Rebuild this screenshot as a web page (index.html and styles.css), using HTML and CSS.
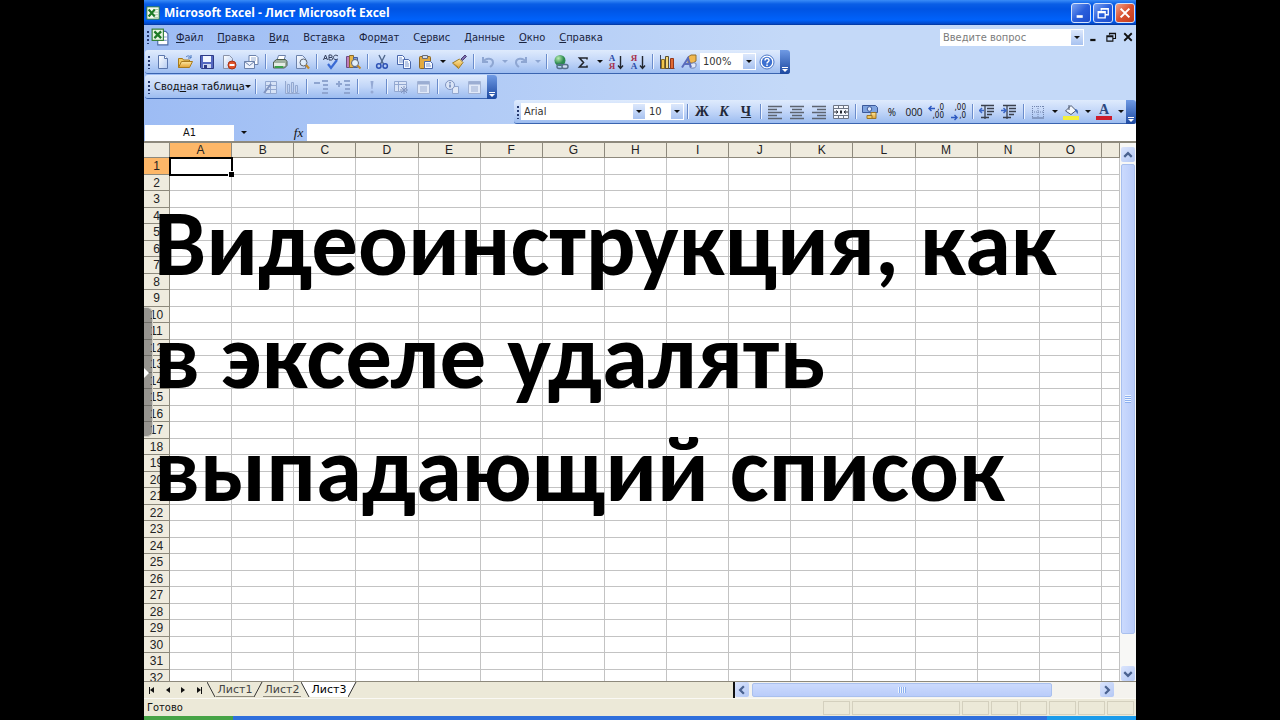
FILE: index.html
```html
<!DOCTYPE html>
<html lang="ru">
<head>
    <meta charset="UTF-8">
    <meta name="viewport" content="width=device-width, initial-scale=1.0">
    <title>Microsoft Excel - Лист Microsoft Excel</title>
    <link rel="stylesheet" href="styles.css">
</head>
<body>

<!-- Иконки -->
<svg class="sprite" aria-hidden="true">
    <defs>
        <linearGradient id="g-blue" x1="0" y1="0" x2="1" y2="1"><stop offset="0" stop-color="#fff"/><stop offset="1" stop-color="#b4cbf2"/></linearGradient>
        <linearGradient id="g-gold" x1="0" y1="0" x2="0" y2="1"><stop offset="0" stop-color="#ffe9a0"/><stop offset="1" stop-color="#e0a030"/></linearGradient>
        <radialGradient id="g-globe" cx=".35" cy=".3"><stop offset="0" stop-color="#b8ecb0"/><stop offset="1" stop-color="#2c8a50"/></radialGradient>
    </defs>
    <symbol id="i-excel" viewBox="0 0 16 16"><rect x="1" y="1" width="14" height="14" fill="#f4faf0" stroke="#2f7d32"/><path d="M9 4h5M9 7h5M9 10h5M9 13h5" stroke="#9cc29a"/><path d="M3 4l7 8M10 4l-7 8" stroke="#1d7a26" stroke-width="2.4"/></symbol>
    <symbol id="i-book" viewBox="0 0 16 16"><path d="M6 3h7l2 2v10H6z" fill="#fff" stroke="#4a6aa5"/><path d="M11 8h3M11 11h3" stroke="#8aa4cf"/><rect x="1" y="1" width="10" height="10" fill="#eaf6e4" stroke="#2f7d32"/><path d="M3 3l6 6M9 3l-6 6" stroke="#1d7a26" stroke-width="2"/></symbol>
    <symbol id="i-new" viewBox="0 0 16 16"><path d="M3.500 1.500h6l3 3v10h-9z" fill="url(#g-blue)" stroke="#5b76ad"/><path d="M9.500 1.500v3h3" fill="#fff" stroke="#5b76ad"/></symbol>
    <symbol id="i-open" viewBox="0 0 16 16"><path d="M1.500 13.500v-9h4l1 1.500h6v3" fill="#f3cc62" stroke="#a87a1c"/><path d="M1.500 13.500l3-6h11l-3 6z" fill="url(#g-gold)" stroke="#a87a1c"/><path d="M9 3c2-2 4-1 5 1m0-3v3h-3" fill="none" stroke="#4a78c0"/></symbol>
    <symbol id="i-save" viewBox="0 0 16 16"><path d="M1.500 1.500h13v13h-12l-1-1z" fill="#5468c0" stroke="#2e3a86"/><rect x="4" y="2" width="8" height="6" fill="#f2f6ff"/><rect x="4" y="10" width="8" height="4" fill="#cdd6ee"/><rect x="5" y="11" width="3" height="3" fill="#2e3a86"/></symbol>
    <symbol id="i-perm" viewBox="0 0 16 16"><path d="M2.500 1.500h6l3 3v10h-9z" fill="url(#g-blue)" stroke="#8a93a8"/><circle cx="11" cy="11" r="4" fill="#e0542c" stroke="#a83214"/><path d="M8.500 11h5" stroke="#fff" stroke-width="2"/></symbol>
    <symbol id="i-mail" viewBox="0 0 16 16"><path d="M6 1.500h7l2 2v7H6z" fill="#fff" stroke="#6c82ab"/><path d="M8 4h5M8 6h5" stroke="#9ab0d6"/><path d="M1.500 7.500h10v7h-10z" fill="#edf2fc" stroke="#6c82ab"/><path d="M1.500 7.500l5 4 5-4" fill="none" stroke="#6c82ab"/></symbol>
    <symbol id="i-print" viewBox="0 0 16 16"><path d="M5 6l1.500-4.500h7L12 6" fill="#fff" stroke="#6c82ab"/><path d="M1.500 8l3-2.500h9l1.500 2v4l-2.500 2.500h-11z" fill="#9fb09f" stroke="#4c5c4e"/><path d="M2 9h11v3H2z" fill="#e4ece4"/><path d="M3 13h8" stroke="#38a048" stroke-width="2"/></symbol>
    <symbol id="i-preview" viewBox="0 0 16 16"><path d="M2.500 1.500h6l3 3v10h-9z" fill="url(#g-blue)" stroke="#6c82ab"/><circle cx="9.500" cy="8.500" r="3.500" fill="#e2f0fc" fill-opacity=".9" stroke="#5c6470"/><path d="M12 11l3 3.500" stroke="#c48a28" stroke-width="2.200"/></symbol>
    <symbol id="i-spell" viewBox="0 0 16 16"><path d="M.5 6L2.500 1l2 5M1.300 4.500h2.400M6 1v5h2.500c1.500 0 1.500-2.500 0-2.500H6h2c1.500 0 1.500-2.500 0-2.500zM15 2c-3-2-4.500 0-4.500 1.500S12 6.500 15 5" fill="none" stroke="#333f5c"/><path d="M5 10l3 4 6-8" fill="none" stroke="#3a6ad4" stroke-width="2.200"/></symbol>
    <symbol id="i-research" viewBox="0 0 16 16"><path d="M1.500 2.500h3v11h-3z" fill="#c07cb8" stroke="#6e4a84"/><path d="M4.500 1.500h4v12h-4z" fill="#e6b64a" stroke="#8a6a28"/><path d="M8.500 3.500h4v10h-4z" fill="#7f9ad8" stroke="#48609c"/><circle cx="10" cy="9" r="3.500" fill="#e2f0fc" stroke="#5c6470"/><path d="M12.500 11.500l3 3" stroke="#c48a28" stroke-width="2"/></symbol>
    <symbol id="i-cut" viewBox="0 0 16 16"><path d="M5 1l4.500 9M11 1L6.500 10" stroke="#50688c" stroke-width="1.400"/><circle cx="4.800" cy="12" r="2.200" fill="none" stroke="#2c50b4" stroke-width="1.500"/><circle cx="11.200" cy="12" r="2.200" fill="none" stroke="#2c50b4" stroke-width="1.500"/></symbol>
    <symbol id="i-copy" viewBox="0 0 16 16"><path d="M1.500 1.500h5l2 2v7h-7z" fill="#f6f9ff" stroke="#4a68ac"/><path d="M3 4h3M3 6h4M3 8h4" stroke="#7f9ad0"/><path d="M7.500 5.500h5l2 2v7h-7z" fill="#f6f9ff" stroke="#4a68ac"/><path d="M9 8h3M9 10h4M9 12h4" stroke="#7f9ad0"/></symbol>
    <symbol id="i-paste" viewBox="0 0 16 16"><rect x="1.500" y="2.500" width="11" height="12" rx="1" fill="#e2aa40" stroke="#8a6420"/><path d="M4.500 1.500h5v3h-5z" fill="#d8dce6" stroke="#6a6e78"/><path d="M6.500 7.500h6l2 2v5h-8z" fill="#f6f9ff" stroke="#4a68ac"/><path d="M8 10h4M8 12h5" stroke="#7f9ad0"/></symbol>
    <symbol id="i-brush" viewBox="0 0 16 16"><path d="M10 5l4-4 1.500 1.500-4 4z" fill="#7c6cb0" stroke="#4c4074"/><path d="M1.500 9l7-4 3.500 3.500-4.500 6z" fill="url(#g-gold)" stroke="#9c7c28"/><path d="M3 10l4 3" stroke="#b88c2c"/></symbol>
    <symbol id="i-undo" viewBox="0 0 16 16"><path d="M3 3v5h5M3 8c3-5 10-4 10 .5 0 2-1.500 3.500-3 4.500" fill="none" stroke="#8ea6d2" stroke-width="2"/></symbol>
    <symbol id="i-redo" viewBox="0 0 16 16"><path d="M13 3v5H8M13 8C10 3 3 4 3 8.500c0 2 1.500 3.500 3 4.500" fill="none" stroke="#8ea6d2" stroke-width="2"/></symbol>
    <symbol id="i-link" viewBox="0 0 16 16"><circle cx="7" cy="6.500" r="5.500" fill="url(#g-globe)"/><rect x="4" y="10.500" width="6" height="4" rx="2" fill="none" stroke="#56708c" stroke-width="1.500"/><rect x="9" y="10.500" width="6" height="4" rx="2" fill="#d0dcf0" stroke="#56708c" stroke-width="1.500"/></symbol>
    <symbol id="i-sum" viewBox="0 0 16 16"><path d="M12 5.500V4H4.500l4 4.500-4 4.500H12v-1.500" fill="none" stroke="#22262e" stroke-width="1.600"/></symbol>
    <symbol id="i-arrow-down" viewBox="0 0 16 16"><path d="M12.500 1v12M10 10.500l2.500 3 2.500-3" fill="none" stroke="#22262e" stroke-width="1.400"/></symbol>
    <symbol id="i-chart" viewBox="0 0 16 16"><path d="M1.500 1v13.500h14" fill="none" stroke="#3a4660"/><path d="M2.500 5.500h3v9h-3z" fill="#f0c64c" stroke="#8c6c20"/><path d="M6.500 2.500h3v12h-3z" fill="#f4d878" stroke="#5c5030"/><path d="M11.500 4.500h3v10h-3z" fill="#e06a34" stroke="#94381c"/></symbol>
    <symbol id="i-draw" viewBox="0 0 16 16"><path d="M7 3l3-2h5v6l-3 2H7z" fill="#f0b850" stroke="#94702c"/><path d="M9 10.500c2-2 5-2 6-1v3c-1 2-5 2-6 1z" fill="#dfe7f8" stroke="#7084b4"/><path d="M1 13.500L7 4l3 9.500M3.500 10h5" fill="none" stroke="#5a6cbc" stroke-width="2"/></symbol>
    <symbol id="i-help" viewBox="0 0 16 16"><circle cx="8" cy="8" r="7" fill="#fff" stroke="#4c78c8"/><circle cx="8" cy="8" r="5.200" fill="#3c70d0"/><path d="M6 6.500c0-3 4.200-2.500 4 0C9.800 8 8 7.800 8 9.500M8 10.500v1.500" fill="none" stroke="#fff" stroke-width="1.500"/></symbol>
    <symbol id="i-pivot" viewBox="0 0 16 16"><path d="M3.500 2.500h11v12h-11zM3.500 6.500h11M3.500 10.500h11M8.500 2.500v12" fill="#d6e2f6" stroke="#93a8d0"/><path d="M2 14L9 5" stroke="#8094c0" stroke-width="2"/></symbol>
    <symbol id="i-bars" viewBox="0 0 16 16"><path d="M1.500 2v12.500h14M3.500 5.500h2v8h-2zM7.500 3.500h2v10h-2zM11.500 6.500h2v7h-2z" fill="#c6d4ee" stroke="#93a8d0"/></symbol>
    <symbol id="i-hide" viewBox="0 0 16 16"><path d="M1 4h6M9 2h6M10 6h5M10 10h5M9 14h6" stroke="#8fa5d0" stroke-width="2"/></symbol>
    <symbol id="i-show" viewBox="0 0 16 16"><path d="M1 5h6M4 2v6M9 2h6M10 6h5M10 10h5M9 14h6" stroke="#8fa5d0" stroke-width="2"/></symbol>
    <symbol id="i-bang" viewBox="0 0 16 16"><path d="M6.500 2h3l-1 8h-1z" fill="#94a9d4"/><circle cx="8" cy="13" r="1.500" fill="#94a9d4"/></symbol>
    <symbol id="i-field" viewBox="0 0 16 16"><path d="M1.500 2.500h12v10h-12zM1.500 5.500h12M5.500 2.500v10" fill="#dbe5f7" stroke="#93a8d0"/><path d="M11 7v8M7 11h8M8 8l6 6M14 8l-6 6" stroke="#8094c0"/></symbol>
    <symbol id="i-form" viewBox="0 0 16 16"><path d="M2.500 2.500h12v12h-12z" fill="#e1e9f8" stroke="#a2b3d5"/><path d="M3 4h11" stroke="#9badd2" stroke-width="3"/><path d="M5 8h7M5 10h7M5 12h7" stroke="#9badd2"/></symbol>
    <symbol id="i-info" viewBox="0 0 16 16"><path d="M8.500 7.500h6v7h-6z" fill="#e1e9f8" stroke="#93a8d0"/><circle cx="6" cy="6" r="4.500" fill="#dbe5f7" stroke="#8094c0"/><path d="M6 3v1.500M6 5.500v3" stroke="#6c82b4" stroke-width="1.500"/></symbol>
    <symbol id="i-left" viewBox="0 0 16 16"><path d="M1 2.500h14M1 5.500h9M1 8.500h14M1 11.500h9M1 14.500h14" stroke="#5d6470" stroke-width="1.400"/></symbol>
    <symbol id="i-center" viewBox="0 0 16 16"><path d="M1 2.500h14M3 5.500h10M1 8.500h14M3 11.500h10M1 14.500h14" stroke="#5d6470" stroke-width="1.400"/></symbol>
    <symbol id="i-right" viewBox="0 0 16 16"><path d="M1 2.500h14M6 5.500h9M1 8.500h14M6 11.500h9M1 14.500h14" stroke="#5d6470" stroke-width="1.400"/></symbol>
    <symbol id="i-merge" viewBox="0 0 16 16"><path d="M.5 1.500h15v13H.5zM.5 4.500h15M.5 11.500h15M5.500 1.500v3M10.500 1.500v3M5.500 11.500v3M10.500 11.500v3" fill="#f4f7fd" stroke="#6c7484"/><path d="M1 8h4M3 6.500L5 8 3 9.500M15 8h-4M13 6.500L11 8l2 1.500" fill="none" stroke="#2a2e38"/><path d="M7 6.500h2v3H7z" fill="#22262e"/></symbol>
    <symbol id="i-money" viewBox="0 0 16 16"><path d="M.5 1.500h13l2 2v5H.5z" fill="#7fa4e0" stroke="#3c5a9c"/><circle cx="7.500" cy="5" r="2.300" fill="#dce8fc" stroke="#3c5a9c"/><path d="M9 8.500h5v6H9z" fill="url(#g-gold)" stroke="#9c7424"/><path d="M5 11.500h5v3H5z" fill="#f0c860" stroke="#9c7424"/></symbol>
    <symbol id="i-tiny-left" viewBox="0 0 16 16"><path d="M1 3.500h6M3.500 1L1 3.500 3.500 6" fill="none" stroke="#2c58c0" stroke-width="1.400"/></symbol>
    <symbol id="i-tiny-right" viewBox="0 0 16 16"><path d="M1 12.500h6M4.500 10L7 12.500 4.500 15" fill="none" stroke="#2c58c0" stroke-width="1.400"/></symbol>
    <symbol id="i-outdent" viewBox="0 0 16 16"><path d="M2 1.500h13M8 4.500h7M8 7.500h7M8 10.500h5M2 13.500h8M6 2v13" stroke="#3a404c" stroke-width="1.300"/><path d="M0 6.500h5M3 4L.5 6.500 3 9" fill="none" stroke="#3c68c8" stroke-width="1.500"/></symbol>
    <symbol id="i-indent" viewBox="0 0 16 16"><path d="M2 1.500h13M8 4.500h7M8 7.500h7M8 10.500h5M2 13.500h8M6 2v13" stroke="#3a404c" stroke-width="1.300"/><path d="M0 6.500h5M2.500 4L5 6.500 2.500 9" fill="none" stroke="#3c68c8" stroke-width="1.500"/></symbol>
    <symbol id="i-border" viewBox="0 0 16 16"><path d="M2.500 2v11M8 2v11M13.500 2v11M2 2.500h12M2 8h12" stroke="#7286ae" stroke-dasharray="1 1"/><path d="M2 14h12" stroke="#5c6e94"/></symbol>
    <symbol id="i-fill" viewBox="0 0 16 16"><path d="M2.500 7L8 1.500l5 5L8 10.500z" fill="#f2f6fc" stroke="#4c5870"/><path d="M6 6V1" stroke="#4c5870"/><path d="M12 5c3 0 3.500 3 2.500 5-1-1-1-2.500-2.500-3z" fill="#3c68b8"/><rect x="0" y="12" width="16" height="4" fill="#f4f03c"/></symbol>
    <symbol id="i-min" viewBox="0 0 16 16"><path d="M3 12h7" stroke="currentColor" stroke-width="3"/></symbol>
    <symbol id="i-restore" viewBox="0 0 16 16"><path d="M6 5V3h8v7h-3M6 3.500h8M2.500 6.500h8v7h-8zM2 7.500h9" fill="none" stroke="currentColor" stroke-width="1.500"/></symbol>
    <symbol id="i-close" viewBox="0 0 16 16"><path d="M3 3l10 10M13 3L3 13" stroke="currentColor" stroke-width="2.400"/></symbol>
    <symbol id="i-chevron" viewBox="0 0 16 16"><path d="M3 10.500l5-5 5 5" fill="none" stroke="#4a6290" stroke-width="3"/></symbol>
</svg>

<div class="window">
    <header class="title-bar">
        <svg class="icon"><use href="#i-excel"/></svg>
        <span class="title">Microsoft Excel - Лист Microsoft Excel</span>
        <button class="win-btn" aria-label="Свернуть"><svg><use href="#i-min"/></svg></button>
        <button class="win-btn" aria-label="Восстановить"><svg><use href="#i-restore"/></svg></button>
        <button class="win-btn close" aria-label="Закрыть"><svg><use href="#i-close"/></svg></button>
    </header>

    <div class="bars">
        <!-- Меню -->
        <nav class="menu">
            <span class="grip"></span>
            <svg class="book"><use href="#i-book"/></svg>
            <div class="menu-items">
                <a href="#"><u>Ф</u>айл</a>
                <a href="#"><u>П</u>равка</a>
                <a href="#"><u>В</u>ид</a>
                <a href="#">Вст<u>а</u>вка</a>
                <a href="#">Фор<u>м</u>ат</a>
                <a href="#">С<u>е</u>рвис</a>
                <a href="#"><u>Д</u>анные</a>
                <a href="#"><u>О</u>кно</a>
                <a href="#"><u>С</u>правка</a>
            </div>
            <div class="combo ask">
                <input type="text" aria-label="Справка" placeholder="Введите вопрос">
                <button class="drop" aria-label="Список вопросов"></button>
            </div>
            <div class="doc-btns">
                <button aria-label="Свернуть книгу"><svg><use href="#i-min"/></svg></button>
                <button aria-label="Восстановить книгу"><svg><use href="#i-restore"/></svg></button>
                <button aria-label="Закрыть книгу"><svg><use href="#i-close"/></svg></button>
            </div>
        </nav>

        <!-- Стандартная панель -->
        <div class="toolbar">
            <span class="grip"></span>
            <button class="tool" aria-label="Создать"><svg><use href="#i-new"/></svg></button>
            <button class="tool" aria-label="Открыть"><svg><use href="#i-open"/></svg></button>
            <button class="tool" aria-label="Сохранить"><svg><use href="#i-save"/></svg></button>
            <button class="tool" aria-label="Разрешения"><svg><use href="#i-perm"/></svg></button>
            <button class="tool" aria-label="Сообщение"><svg><use href="#i-mail"/></svg></button>
            <span class="sep"></span>
            <button class="tool" aria-label="Печать"><svg><use href="#i-print"/></svg></button>
            <button class="tool" aria-label="Просмотр"><svg><use href="#i-preview"/></svg></button>
            <span class="sep"></span>
            <button class="tool" aria-label="Орфография"><svg><use href="#i-spell"/></svg></button>
            <button class="tool" aria-label="Справочные материалы"><svg><use href="#i-research"/></svg></button>
            <span class="sep"></span>
            <button class="tool" aria-label="Вырезать"><svg><use href="#i-cut"/></svg></button>
            <button class="tool" aria-label="Копировать"><svg><use href="#i-copy"/></svg></button>
            <button class="tool" aria-label="Вставить"><svg><use href="#i-paste"/></svg></button>
            <button class="arrow" aria-label="Параметры вставки"></button>
            <button class="tool" aria-label="Формат по образцу"><svg><use href="#i-brush"/></svg></button>
            <span class="sep"></span>
            <button class="tool" aria-label="Отменить"><svg><use href="#i-undo"/></svg></button>
            <button class="arrow off" aria-label="Список отмены"></button>
            <button class="tool" aria-label="Вернуть"><svg><use href="#i-redo"/></svg></button>
            <button class="arrow off" aria-label="Список возврата"></button>
            <span class="sep"></span>
            <button class="tool" aria-label="Гиперссылка"><svg><use href="#i-link"/></svg></button>
            <button class="tool" aria-label="Автосумма"><svg><use href="#i-sum"/></svg></button>
            <button class="arrow" aria-label="Функции"></button>
            <button class="tool sort" aria-label="По возрастанию"><span class="blue">А</span><span class="red">Я</span><svg><use href="#i-arrow-down"/></svg></button>
            <button class="tool sort" aria-label="По убыванию"><span class="red">Я</span><span class="blue">А</span><svg><use href="#i-arrow-down"/></svg></button>
            <span class="sep"></span>
            <button class="tool" aria-label="Мастер диаграмм"><svg><use href="#i-chart"/></svg></button>
            <button class="tool" aria-label="Рисование"><svg><use href="#i-draw"/></svg></button>
            <div class="combo zoom">
                <input type="text" aria-label="Масштаб" value="100%">
                <button class="drop" aria-label="Список масштабов"></button>
            </div>
            <button class="tool" aria-label="Справка"><svg><use href="#i-help"/></svg></button>
            <button class="cap" aria-label="Параметры панели"></button>
        </div>

        <!-- Сводные таблицы -->
        <div class="toolbar">
            <span class="grip"></span>
            <button class="label-btn"><span>Свод<u>н</u>ая таблица</span></button>
            <span class="sep"></span>
            <button class="tool" aria-label="Формат отчета"><svg><use href="#i-pivot"/></svg></button>
            <button class="tool" aria-label="Диаграмма"><svg><use href="#i-bars"/></svg></button>
            <span class="sep"></span>
            <button class="tool" aria-label="Скрыть детали"><svg><use href="#i-hide"/></svg></button>
            <button class="tool" aria-label="Отобразить детали"><svg><use href="#i-show"/></svg></button>
            <span class="sep"></span>
            <button class="tool" aria-label="Обновить данные"><svg><use href="#i-bang"/></svg></button>
            <span class="sep"></span>
            <button class="tool" aria-label="Скрытые элементы"><svg><use href="#i-field"/></svg></button>
            <button class="tool" aria-label="Всегда отображать"><svg><use href="#i-form"/></svg></button>
            <span class="sep"></span>
            <button class="tool" aria-label="Параметры поля"><svg><use href="#i-info"/></svg></button>
            <button class="tool" aria-label="Список полей"><svg><use href="#i-form"/></svg></button>
            <button class="cap" aria-label="Параметры панели"></button>
        </div>

        <!-- Форматирование -->
        <div class="toolbar format">
            <span class="grip"></span>
            <div class="combo font">
                <input type="text" aria-label="Шрифт" value="Arial">
                <button class="drop" aria-label="Список шрифтов"></button>
            </div>
            <div class="combo size">
                <input type="text" aria-label="Размер" value="10">
                <button class="drop" aria-label="Список размеров"></button>
            </div>
            <span class="sep"></span>
            <button class="tool letter"><b>Ж</b></button>
            <button class="tool letter"><i>К</i></button>
            <button class="tool letter"><u>Ч</u></button>
            <span class="sep"></span>
            <button class="tool" aria-label="По левому краю"><svg><use href="#i-left"/></svg></button>
            <button class="tool" aria-label="По центру"><svg><use href="#i-center"/></svg></button>
            <button class="tool" aria-label="По правому краю"><svg><use href="#i-right"/></svg></button>
            <button class="tool" aria-label="Объединить"><svg><use href="#i-merge"/></svg></button>
            <span class="sep"></span>
            <button class="tool" aria-label="Денежный формат"><svg><use href="#i-money"/></svg></button>
            <button class="tool digits">%</button>
            <button class="tool digits">000</button>
            <button class="tool dec"><span>,0</span><span>,00</span><svg><use href="#i-tiny-left"/></svg></button>
            <button class="tool dec"><span>,00</span><span>,0</span><svg><use href="#i-tiny-right"/></svg></button>
            <span class="sep"></span>
            <button class="tool" aria-label="Уменьшить отступ"><svg><use href="#i-outdent"/></svg></button>
            <button class="tool" aria-label="Увеличить отступ"><svg><use href="#i-indent"/></svg></button>
            <span class="sep"></span>
            <button class="tool" aria-label="Границы"><svg><use href="#i-border"/></svg></button>
            <button class="arrow" aria-label="Виды границ"></button>
            <button class="tool" aria-label="Цвет заливки"><svg><use href="#i-fill"/></svg></button>
            <button class="arrow" aria-label="Цвета заливки"></button>
            <button class="tool color"><span>A</span></button>
            <button class="arrow" aria-label="Цвета шрифта"></button>
            <button class="cap" aria-label="Параметры панели"></button>
        </div>

        <!-- Строка формул -->
        <div class="formula">
            <input class="name-box" type="text" aria-label="Имя" value="A1">
            <button class="arrow" aria-label="Список имен"></button>
            <button class="fx">fx</button>
            <input class="formula-input" type="text" aria-label="Формула">
        </div>
    </div>

    <!-- Лист -->
    <main class="sheet">
        <div class="grid">
            <table id="cells"></table>
        </div>
        <div class="v-scroll">
            <button class="scroll-btn" aria-label="Вверх"><svg><use href="#i-chevron"/></svg></button>
            <div class="v-thumb"></div>
            <button class="scroll-btn down" aria-label="Вниз"><svg><use href="#i-chevron"/></svg></button>
        </div>
        <div class="side-handle"></div>
        <h1 class="caption">Видеоинструкция, как<br>в экселе удалять<br>выпадающий список</h1>
    </main>

    <div class="tabs-row">
        <div class="tab-nav">
            <button class="nav-first" aria-label="Первый лист"></button>
            <button class="nav-prev" aria-label="Предыдущий лист"></button>
            <button class="nav-next" aria-label="Следующий лист"></button>
            <button class="nav-last" aria-label="Последний лист"></button>
        </div>
        <div class="tabs">
            <svg class="slant"><path d="M0 0l8 15"/></svg>
            <button class="tab">Лист1</button>
            <svg class="slant"><path d="M8 0L0 15"/></svg>
            <button class="tab">Лист2</button>
            <svg class="slant"><path class="white" d="M0 0h9v15H8z"/><path d="M0 0l8 15"/></svg>
            <button class="tab active">Лист3</button>
            <svg class="slant"><path class="white" d="M0 0h8L0 15z"/><path d="M8 0L0 15"/></svg>
        </div>
        <div class="h-scroll">
            <button class="scroll-btn left" aria-label="Влево"><svg><use href="#i-chevron"/></svg></button>
            <div class="h-track"><div class="h-thumb"></div></div>
            <button class="scroll-btn right" aria-label="Вправо"><svg><use href="#i-chevron"/></svg></button>
        </div>
    </div>

    <footer class="status">
        <span class="ready">Готово</span>
        <span class="pane"></span>
        <span class="pane wide"></span>
        <span class="pane"></span>
        <span class="pane"></span>
        <span class="pane"></span>
        <span class="pane"></span>
        <span class="pane"></span>
        <span class="pane"></span>
    </footer>
    <div class="taskbar"><span class="start"></span><span class="tray"></span></div>
</div>

<script>
    const table = document.getElementById('cells');
    const columns = 'ABCDEFGHIJKLMNO'.split('').concat('');

    // Заголовки столбцов
    const head = table.createTHead().insertRow();
    head.appendChild(document.createElement('th')).className = 'row-head';
    columns.forEach(function(name) {
        const th = document.createElement('th');
        th.textContent = name;
        if (name === 'A') th.className = 'current';
        if (name === '') th.className = 'last';
        head.appendChild(th);
    });

    // Строки листа
    const body = table.createTBody();
    for (let i = 1; i <= 32; i++) {
        const row = body.insertRow();
        const th = document.createElement('th');
        th.textContent = i;
        if (i === 1) th.className = 'current';
        row.appendChild(th);
        columns.forEach(function() {
            row.insertCell();
        });
    }
    body.rows[0].cells[1].className = 'selected';
</script>

</body>
</html>
```
FILE: styles.css
```css
* {
    box-sizing: border-box;
}

body {
    margin: 0;
    background: #000;
    font-family: "DejaVu Sans Condensed", Tahoma, sans-serif;
    font-size: 11px;
    color: #111;
}

button, input {
    font: inherit;
    color: inherit;
    border: none;
    background: none;
    padding: 0;
    margin: 0;
    border-radius: 0;
    min-width: 0;
}

.sprite {
    position: absolute;
    width: 0;
    height: 0;
}

.window {
    width: 77.5%;
    height: 100vh;
    margin: 0 auto;
    display: flex;
    flex-direction: column;
    overflow: hidden;
    background: #ece9d8;
}

/* Заголовок */
.title-bar {
    display: flex;
    align-items: center;
    gap: 2px;
    height: 25px;
    padding: 0 1px 0 2px;
    background: linear-gradient(#3a8cf8 0, #0a5ee6 4px, #0054e3 9px, #0062fb 20px, #0346c4 24px, #02318f);
    color: #fff;
}

.title-bar .icon {
    width: 14px;
    height: 14px;
}

.title {
    flex: 1;
    padding-left: 2px;
    font-family: "Open Sans", "Trebuchet MS", sans-serif;
    font-size: 12px;
    font-weight: bold;
    white-space: nowrap;
}

.win-btn {
    display: flex;
    align-items: center;
    justify-content: center;
    width: 20px;
    height: 20px;
    border: 1px solid #d4e2fb;
    border-radius: 3px;
    background: linear-gradient(135deg, #7ba2f2, #2a5fdc 50%, #1c4ccc);
}

.win-btn svg {
    width: 14px;
    height: 14px;
}

.win-btn.close {
    background: linear-gradient(135deg, #f0a088, #da5030 50%, #c03c1c);
}

.bars {
    background: linear-gradient(to right, #9dbcf4, #c4d9f8 65%);
}

/* Меню */
.menu {
    display: flex;
    align-items: center;
    height: 24px;
    padding: 0 2px;
}

.menu-items {
    display: flex;
    flex: 1;
    gap: 14px;
    padding-left: 7px;
}

.menu a {
    color: #1a2440;
    text-decoration: none;
}

.book {
    width: 18px;
    height: 18px;
}

.grip {
    width: 5px;
    height: 14px;
    flex: none;
    background: radial-gradient(circle, #26396e 1px, transparent 1px) 0 0 / 4px 4px repeat-y;
}

.combo {
    display: flex;
    height: 17px;
    padding: 1px;
    background: #fff;
}

.combo input {
    flex: 1;
    width: 0;
    padding: 0 2px;
    color: #333;
}

.combo input::placeholder {
    color: #7b7b7b;
    opacity: 1;
}

.drop {
    width: 12px;
    background: linear-gradient(#dce8fc, #a8c2f0);
}

.drop::before, .arrow::before {
    content: "";
    display: block;
    width: 0;
    margin: 0 auto;
    border: 3px solid transparent;
    border-top-color: #111;
    border-bottom: none;
}

.ask {
    width: 144px;
}

.doc-btns {
    display: flex;
    gap: 5px;
    padding-left: 4px;
}

.doc-btns svg {
    display: block;
    width: 12px;
    height: 12px;
}

/* Панели инструментов */
.toolbar {
    display: flex;
    align-items: center;
    width: fit-content;
    height: 24px;
    margin: 1px 0 0 1px;
    padding-left: 2px;
    border-bottom: 1px solid #3a64b0;
    border-radius: 3px;
    background: linear-gradient(#dfebfd, #c2d6f8 50%, #9cbcf0);
}

.toolbar.format {
    margin-left: auto;
}

.tool {
    display: flex;
    align-items: center;
    justify-content: center;
    flex: none;
    width: 22px;
    height: 22px;
}

.tool svg {
    width: 16px;
    height: 16px;
}

.arrow {
    flex: none;
    width: 11px;
    height: 22px;
}

.arrow.off::before {
    border-top-color: #8ea6d2;
}

.sep {
    flex: none;
    width: 1px;
    height: 15px;
    margin: 0 3px;
    background: #6a8ccb;
    box-shadow: 1px 0 #edf4ff;
}

.sort, .dec, .color {
    position: relative;
    flex-direction: column;
}

.sort svg, .dec svg {
    position: absolute;
    left: 3px;
    top: 4px;
}

.sort span {
    margin-right: 8px;
    font-family: "Liberation Serif", serif;
    font-size: 9px;
    line-height: 8px;
    font-weight: bold;
}

.blue {
    color: #2c4ca8;
}

.red {
    color: #a8304c;
}

.zoom {
    width: 56px;
}

.cap {
    position: relative;
    align-self: stretch;
    width: 10px;
    height: 24px;
    margin-left: 2px;
    border-radius: 0 3px 3px 0;
    background: linear-gradient(#6f9ae4, #1c48a0);
}

.format .cap {
    margin-left: 0;
}

.cap::before {
    content: "";
    position: absolute;
    left: 2px;
    bottom: 2px;
    border: 3px solid transparent;
    border-top-color: #fff;
    border-bottom: none;
}

.cap::after {
    content: "";
    position: absolute;
    left: 2px;
    bottom: 6px;
    width: 6px;
    height: 1px;
    background: #fff;
}

.label-btn {
    display: flex;
    align-items: center;
    justify-content: space-between;
    width: 100px;
    padding: 0 2px;
    white-space: nowrap;
}

.label-btn::after {
    content: "";
    border: 3px solid transparent;
    border-top-color: #111;
    border-bottom: none;
}

.font {
    width: 125px;
}

.size {
    width: 38px;
}

.letter {
    font-family: "Liberation Serif", serif;
    font-size: 14px;
    font-weight: bold;
    color: #22283a;
}

.digits {
    font-family: "Open Sans", sans-serif;
    font-size: 10px;
}

.dec span {
    align-self: flex-end;
    margin-right: 3px;
    font-size: 8px;
    line-height: 8px;
}

.color span {
    width: 16px;
    border-bottom: 4px solid #cc1c2c;
    font-family: "Liberation Serif", serif;
    font-size: 14px;
    line-height: 12px;
    font-weight: bold;
    color: #2c4880;
}

/* Строка формул */
.formula {
    display: flex;
    align-items: center;
    height: 17px;
    padding-left: 1px;
}

.name-box {
    width: 89px;
    height: 16px;
    background: #fff;
    text-align: center;
}

.formula .arrow {
    height: 16px;
    margin-left: 4px;
}

.fx {
    margin-left: auto;
    width: 16px;
    font-family: "Liberation Serif", serif;
    font-size: 13px;
    line-height: 16px;
    font-style: italic;
}

.formula-input {
    width: 83.7%;
    height: 17px;
    background: #fff;
}

/* Лист */
.sheet {
    position: relative;
    display: flex;
    flex: 1;
    min-height: 0;
    background: #fff;
}

.grid {
    flex: 1;
    overflow: hidden;
}

table {
    width: 100%;
    table-layout: fixed;
    border-collapse: separate;
    border-spacing: 0;
    font-family: "Liberation Sans", Arial, sans-serif;
    font-size: 12px;
    line-height: 14px;
}

th {
    height: 17px;
    padding: 0;
    border: solid #8d897c;
    border-width: 0 1px 1px 0;
    background: #efebde;
    font-weight: normal;
    color: #222;
}

thead th {
    border-top: 2px solid #8d897c;
}

tbody tr:nth-child(even) th {
    height: 16px;
}

td {
    padding: 0;
    border: solid #c3c3c3;
    border-width: 0 1px 1px 0;
}

.row-head {
    width: 26px;
}

.last {
    width: 18px;
}

.current {
    background: #fdb768;
}

.selected {
    position: relative;
    outline: 2px solid #000;
    outline-offset: -1px;
}

.selected::after {
    content: "";
    position: absolute;
    right: -3px;
    bottom: -3px;
    width: 5px;
    height: 5px;
    border: solid #fff;
    border-width: 1px 0 0 1px;
    background: #000;
}

.v-scroll {
    display: flex;
    flex-direction: column;
    width: 16px;
    padding: 4px 1px 0;
    border-top: 2px solid #8d897c;
    background: #f8f8f6;
}

.scroll-btn {
    flex: none;
    width: 14px;
    height: 15px;
    border-radius: 2px;
    background: linear-gradient(135deg, #dbe5fd, #b4c8f4);
}

.scroll-btn svg {
    display: block;
    width: 12px;
    height: 12px;
    margin: 0 auto;
}

.down {
    margin-top: auto;
}

.down svg {
    transform: rotate(180deg);
}

.left svg {
    transform: rotate(-90deg);
}

.right svg {
    transform: rotate(90deg);
}

.v-thumb {
    display: flex;
    height: 88%;
    margin-top: 2px;
    border: 1px solid #a9c0ee;
    border-radius: 2px;
    background: linear-gradient(to right, #cbdafd, #b9ccfa);
}

.v-thumb::before {
    content: "";
    width: 6px;
    height: 8px;
    margin: auto;
    background: repeating-linear-gradient(#eef4fe 0 1px, #8cb0f0 1px 2px);
}

/* Выдвижная панель поверх листа */
.side-handle {
    position: absolute;
    left: 0;
    top: 166px;
    width: 9px;
    height: 130px;
    border: 1px solid #d0cec6;
    border-left: none;
    border-radius: 0 6px 6px 0;
    background: rgba(90, 90, 90, 0.6);
}

.side-handle::before {
    content: "";
    position: absolute;
    left: 0;
    top: 60px;
    border: 5px solid transparent;
    border-left-color: #fff;
    border-right: none;
}

.caption {
    position: absolute;
    left: 10px;
    top: 46px;
    margin: 0;
    font-family: Carlito, Calibri, Lato, "Open Sans", sans-serif;
    font-size: 93px;
    line-height: 113px;
    font-weight: bold;
    color: #000;
    white-space: nowrap;
}

/* Ярлычки листов */
.tabs-row {
    display: flex;
    height: 17px;
    border-top: 1px solid #8d897c;
}

.tab-nav {
    display: flex;
    width: 63px;
}

.tab-nav button {
    display: flex;
    flex: 1;
    align-items: center;
    justify-content: center;
}

.nav-prev::before, .nav-first::after {
    content: "";
    border: 3px solid transparent;
    border-right: 4px solid #111;
    border-left: none;
}

.nav-next::before, .nav-last::before {
    content: "";
    border: 3px solid transparent;
    border-left: 4px solid #111;
    border-right: none;
}

.nav-first::before, .nav-last::after {
    content: "";
    width: 1px;
    height: 7px;
    background: #111;
}

.tabs {
    display: flex;
    flex: 1;
}

.slant {
    width: 9px;
    height: 16px;
    fill: none;
    stroke: #333;
}

.slant .white {
    fill: #fff;
    stroke: none;
}

.tab {
    width: 38px;
    height: 15px;
    border-bottom: 1px solid #8d897c;
    font-family: "DejaVu Sans", sans-serif;
    line-height: 13px;
    color: #444;
}

.tab.active {
    background: #fff;
    border-bottom: none;
    color: #000;
}

.h-scroll {
    display: flex;
    width: 403px;
    max-width: 60%;
    padding-right: 22px;
    border-left: 2px solid #111;
    background: #f4f3ee;
}

.h-track {
    flex: 1;
    padding: 1px 3px;
}

.h-thumb {
    display: flex;
    width: 87%;
    height: 14px;
    border: 1px solid #a9c0ee;
    border-radius: 2px;
    background: linear-gradient(#cbdafd, #b9ccfa);
}

.h-thumb::before {
    content: "";
    width: 8px;
    height: 6px;
    margin: auto;
    background: repeating-linear-gradient(to right, #eef4fe 0 1px, #8cb0f0 1px 2px);
}

/* Строка состояния */
.status {
    display: flex;
    align-items: center;
    gap: 2px;
    height: 18px;
    padding: 0 2px;
    border-top: 1px solid #faf9f4;
}

.ready {
    flex: 1;
    padding-left: 1px;
}

.pane {
    width: 27px;
    height: 14px;
    border: 1px solid #d4d0be;
}

.pane.wide {
    width: 108px;
}

.taskbar {
    display: flex;
    justify-content: space-between;
    height: 4px;
    background: #2f6fdc;
}

.start {
    width: 9%;
    background: #46a346;
}

.tray {
    width: 9%;
    background: #1b9bea;
}
```
